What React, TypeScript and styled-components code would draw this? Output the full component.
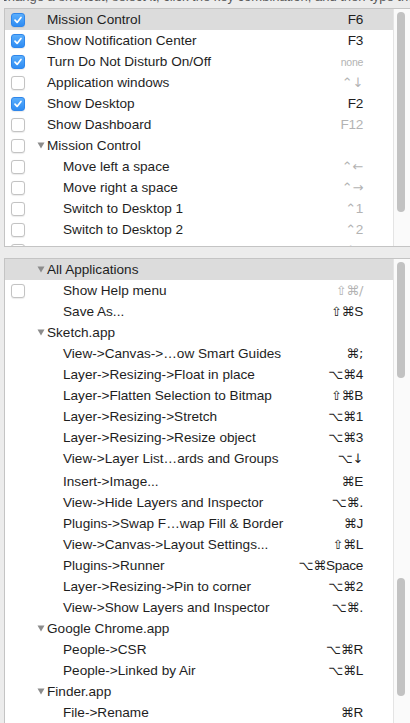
import React from "react";
import styled, { createGlobalStyle } from "styled-components";

type Item = {
  name: string;
  keys?: string;
  dim?: boolean;
  small?: boolean;
  level?: number;
  group?: boolean;
  check?: "on" | "off";
  selected?: boolean;
  gapTop?: number;
};

const topItems: Item[] = [
  { name: "Mission Control", keys: "F6", check: "on", selected: true },
  { name: "Show Notification Center", keys: "F3", check: "on" },
  { name: "Turn Do Not Disturb On/Off", keys: "none", dim: true, small: true, check: "on" },
  { name: "Application windows", keys: "⌃↓", dim: true, check: "off" },
  { name: "Show Desktop", keys: "F2", check: "on" },
  { name: "Show Dashboard", keys: "F12", dim: true, check: "off" },
  { name: "Mission Control", group: true, check: "off" },
  { name: "Move left a space", keys: "⌃←", dim: true, level: 1, check: "off" },
  { name: "Move right a space", keys: "⌃→", dim: true, level: 1, check: "off" },
  { name: "Switch to Desktop 1", keys: "⌃1", dim: true, level: 1, check: "off" },
  { name: "Switch to Desktop 2", keys: "⌃2", dim: true, level: 1, check: "off" },
  { name: "Switch to Desktop 3", keys: "⌃3", dim: true, level: 1, check: "off" },
];

const appItems: Item[] = [
  { name: "All Applications", group: true, selected: true },
  { name: "Show Help menu", keys: "⇧⌘/", dim: true, level: 1, check: "off" },
  { name: "Save As...", keys: "⇧⌘S", level: 1 },
  { name: "Sketch.app", group: true },
  { name: "View->Canvas->…ow Smart Guides", keys: "⌘;", level: 1 },
  { name: "Layer->Resizing->Float in place", keys: "⌥⌘4", level: 1 },
  { name: "Layer->Flatten Selection to Bitmap", keys: "⇧⌘B", level: 1 },
  { name: "Layer->Resizing->Stretch", keys: "⌥⌘1", level: 1 },
  { name: "Layer->Resizing->Resize object", keys: "⌥⌘3", level: 1 },
  { name: "View->Layer List…ards and Groups", keys: "⌥↓", level: 1 },
  { name: "Insert->Image...", keys: "⌘E", level: 1, gapTop: 2 },
  { name: "View->Hide Layers and Inspector", keys: "⌥⌘.", level: 1 },
  { name: "Plugins->Swap F…wap Fill & Border", keys: "⌘J", level: 1 },
  { name: "View->Canvas->Layout Settings...", keys: "⇧⌘L", level: 1 },
  { name: "Plugins->Runner", keys: "⌥⌘Space", level: 1 },
  { name: "Layer->Resizing->Pin to corner", keys: "⌥⌘2", level: 1 },
  { name: "View->Show Layers and Inspector", keys: "⌥⌘.", level: 1 },
  { name: "Google Chrome.app", group: true },
  { name: "People->CSR", keys: "⌥⌘R", level: 1 },
  { name: "People->Linked by Air", keys: "⌥⌘L", level: 1 },
  { name: "Finder.app", group: true },
  { name: "File->Rename", keys: "⌘R", level: 1 },
];

const GlobalStyle = createGlobalStyle`
  html, body {
    margin: 0;
    background: #ececec;
    overflow: hidden;
  }
  body {
    font-family: "Liberation Sans", "DejaVu Sans", sans-serif;
    color: #1e1e1e;
  }
`;

const Window = styled.div`
  width: 410px;
  height: 723px;
  overflow: hidden;
  padding-left: 4px;
  box-sizing: border-box;
`;

const Hint = styled.div`
  height: 8px;
  overflow: hidden;
  font-size: 13px;
  line-height: 16px;
  color: #5a5a5a;
  white-space: nowrap;
  span {
    display: block;
    margin-top: -11px;
    margin-left: -20px;
  }
`;

const Panel = styled.div<{ $height: number }>`
  display: flex;
  box-sizing: border-box;
  margin-right: -2px;
  border: 1px solid #c4c4c4;
  background: #fff;
  height: ${(p) => p.$height}px;
  overflow: hidden;
  & + & {
    margin-top: 11px;
  }
`;

const List = styled.div`
  width: 388px;
  flex: none;
`;

const Track = styled.div`
  position: relative;
  flex: 1;
  background: #fafafa;
  border-left: 1px solid #e4e4e4;
`;

const Thumb = styled.div<{ $top: number; $h: number }>`
  position: absolute;
  left: 3px;
  width: 8px;
  top: ${(p) => p.$top}px;
  height: ${(p) => p.$h}px;
  border-radius: 4px;
  background: #c2c2c2;
`;

const Row = styled.div<{ $selected?: boolean; $gapTop?: number }>`
  display: flex;
  align-items: center;
  height: 21px;
  margin-top: ${(p) => p.$gapTop || 0}px;
  padding-left: 6px;
  background: ${(p) => (p.$selected ? "#dcdcdc" : "transparent")};
  font-size: 13.6px;
  white-space: nowrap;
`;

const CheckSlot = styled.div`
  width: 14px;
  height: 14px;
  flex: none;
`;

const Box = styled.div<{ $on: boolean }>`
  box-sizing: border-box;
  width: 14px;
  height: 14px;
  border-radius: 3px;
  display: flex;
  align-items: center;
  justify-content: center;
  border: 1px solid ${(p) => (p.$on ? "#2f86ea" : "#c3c3c3")};
  background: ${(p) => (p.$on ? "linear-gradient(#5aaefc, #2f8cf3)" : "#fff")};
  box-shadow: 0 0.5px 1px rgba(0, 0, 0, 0.08);
`;

const Name = styled.div<{ $indent: number }>`
  display: flex;
  align-items: center;
  margin-left: ${(p) => p.$indent}px;
`;

const Disclosure = styled.svg`
  width: 8px;
  height: 7px;
  margin-right: 2px;
  flex: none;
`;

const Keys = styled.div<{ $dim?: boolean; $small?: boolean }>`
  margin-left: auto;
  padding-right: 30px;
  font-family: "DejaVu Sans", "Liberation Sans", sans-serif;
  font-size: ${(p) => (p.$small ? "10.5px" : "13px")};
  color: ${(p) => (p.$dim ? "#b3b3b3" : "#1e1e1e")};
  letter-spacing: -0.3px;
  span {
    font-family: "Liberation Sans", sans-serif;
    font-size: ${(p) => (p.$small ? "10.5px" : "13.6px")};
  }
`;

function Check({ on }: { on: boolean }) {
  return (
    <Box $on={on}>
      {on && (
        <svg width="10" height="10" viewBox="0 0 10 10">
          <path d="M2 5.2 L4.1 7.4 L8 2.4" fill="none" stroke="#fff" strokeWidth="1.7" strokeLinecap="round" strokeLinejoin="round" />
        </svg>
      )}
    </Box>
  );
}

// letters and digits in the normal face, symbols in DejaVu
function KeyText({ text }: { text: string }) {
  const parts = text.match(/[A-Za-z0-9]+|[^A-Za-z0-9]+/g) || [];
  return (
    <>
      {parts.map((p, i) => (/^[A-Za-z0-9]/.test(p) ? <span key={i}>{p}</span> : p))}
    </>
  );
}

function ShortcutRow({ item }: { item: Item }) {
  const indent = item.group ? 12 : item.level === 1 ? 38 : 22;
  return (
    <Row $selected={item.selected} $gapTop={item.gapTop}>
      <CheckSlot>{item.check && <Check on={item.check === "on"} />}</CheckSlot>
      <Name $indent={indent}>
        {item.group && (
          <Disclosure viewBox="0 0 8 7">
            <path d="M0.5 0.5 H7.5 L4 6.5 Z" fill="#8c8c8c" />
          </Disclosure>
        )}
        {item.name}
      </Name>
      {item.keys && (
        <Keys $dim={item.dim} $small={item.small}>
          <KeyText text={item.keys} />
        </Keys>
      )}
    </Row>
  );
}

export default function App() {
  return (
    <Window>
      <GlobalStyle />
      <Hint>
        <span>To change a shortcut, select it, click the key combination, and then type the new keys.</span>
      </Hint>
      <Panel $height={239}>
        <List>
          {topItems.map((it, i) => (
            <ShortcutRow key={i} item={it} />
          ))}
        </List>
        <Track>
          <Thumb $top={3} $h={200} />
        </Track>
      </Panel>
      <Panel $height={480}>
        <List>
          {appItems.map((it, i) => (
            <ShortcutRow key={i} item={it} />
          ))}
        </List>
        <Track>
          <Thumb $top={3} $h={116} />
          <Thumb $top={319} $h={118} />
        </Track>
      </Panel>
    </Window>
  );
}
